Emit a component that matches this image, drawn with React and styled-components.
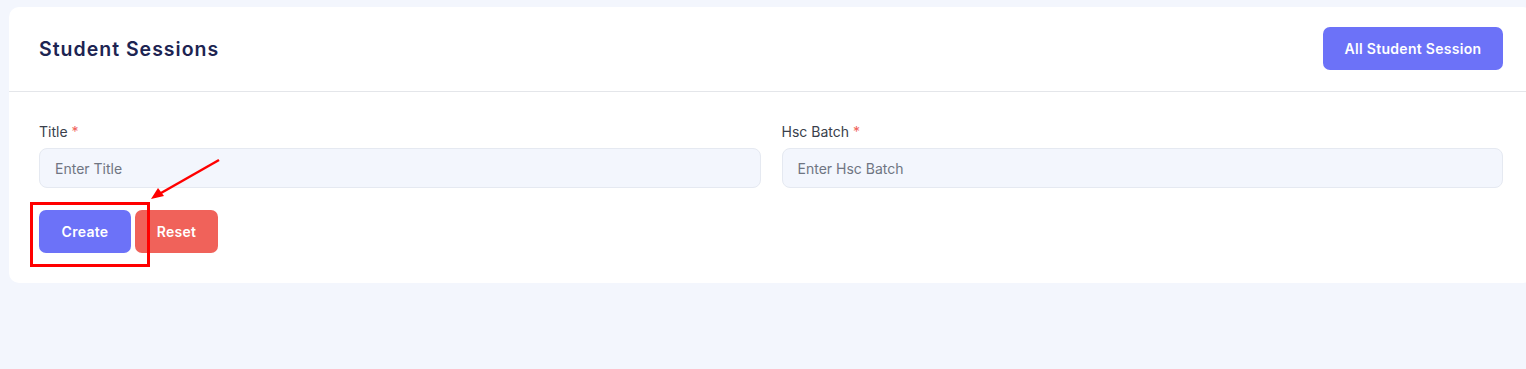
import React from "react";
import styled, { createGlobalStyle } from "styled-components";

const GlobalStyle = createGlobalStyle`
  html, body {
    margin: 0;
    padding: 0;
    background-color: #f3f6fd;
    overflow: hidden;
  }
  body {
    font-family: "Inter", "Liberation Sans", sans-serif;
  }
`;

const Page = styled.div`
  position: relative;
  width: 1526px;
  height: 369px;
  padding: 7px 0 0 9px;
  box-sizing: border-box;
`;

const StyledCard = styled.div`
  width: 1524px;
  background-color: #fff;
  border-radius: 10px;
`;

const StyledHeader = styled.div`
  display: flex;
  justify-content: space-between;
  align-items: center;
  padding: 20px 30px 21px 30px;
  border-bottom: 1px solid #e4e6ea;
`;

const StyledTitle = styled.h1`
  margin: 0;
  color: #1d2452;
  font-size: 19.5px;
  font-weight: 600;
  letter-spacing: 1px;
`;

const StyledButton = styled.button`
  font-family: "Inter", "Liberation Sans", sans-serif;
  background-color: ${(props) => props.color || "#6c72f8"};
  border: none;
  color: #fff;
  height: 43px;
  width: ${(props) => props.width}px;
  padding: 0;
  border-radius: 7px;
  font-size: 14px;
  font-weight: 600;
  letter-spacing: 0.3px;
  white-space: nowrap;
  text-align: center;
  cursor: pointer;
  outline: none;
`;

const StyledBody = styled.div`
  padding: 30px;
`;

const StyledFields = styled.div`
  display: grid;
  grid-template-columns: 1fr 1fr;
  column-gap: 21px;
`;

const StyledField = styled.div`
  display: flex;
  flex-direction: column;
`;

const StyledLabel = styled.label`
  color: #3a3f4c;
  font-size: 14px;
  line-height: 20px;
  margin-bottom: 6px;
`;

const StyledStar = styled.span`
  color: #f0625a;
`;

const StyledInput = styled.input`
  font-family: "Inter", "Liberation Sans", sans-serif;
  height: 40px;
  box-sizing: border-box;
  background-color: #f3f6fd;
  border: 1px solid #e5e9f1;
  border-radius: 8px;
  padding: 0 15px;
  font-size: 14px;
  color: #333;
  outline: none;
  &::placeholder {
    color: #6f7582;
  }
`;

const StyledActions = styled.div`
  display: flex;
  gap: 4px;
  margin-top: 22px;
`;

const StyledHighlight = styled.div`
  position: absolute;
  left: 30px;
  top: 202px;
  width: 114px;
  height: 59px;
  border: 3px solid #ff0000;
`;

const StyledArrow = styled.svg`
  position: absolute;
  left: 140px;
  top: 150px;
`;

const App = () => {
  return (
    <>
      <GlobalStyle />
      <Page>
        <StyledCard>
          <StyledHeader>
            <StyledTitle>Student Sessions</StyledTitle>
            <StyledButton width={180}>All Student Session</StyledButton>
          </StyledHeader>
          <StyledBody>
            <StyledFields>
              <StyledField>
                <StyledLabel>
                  Title <StyledStar>*</StyledStar>
                </StyledLabel>
                <StyledInput placeholder="Enter Title" />
              </StyledField>
              <StyledField>
                <StyledLabel>
                  Hsc Batch <StyledStar>*</StyledStar>
                </StyledLabel>
                <StyledInput placeholder="Enter Hsc Batch" />
              </StyledField>
            </StyledFields>
            <StyledActions>
              <StyledButton width={92}>Create</StyledButton>
              <StyledButton color="#f0625a" width={83}>
                Reset
              </StyledButton>
            </StyledActions>
          </StyledBody>
        </StyledCard>
        <StyledHighlight />
        <StyledArrow width="90" height="60" viewBox="0 0 90 60">
          <line x1="79" y1="10" x2="14" y2="47" stroke="#ff0000" strokeWidth="2.5" />
          <polygon points="11,49 18,38 24,46" fill="#ff0000" />
        </StyledArrow>
      </Page>
    </>
  );
};

export default App;
